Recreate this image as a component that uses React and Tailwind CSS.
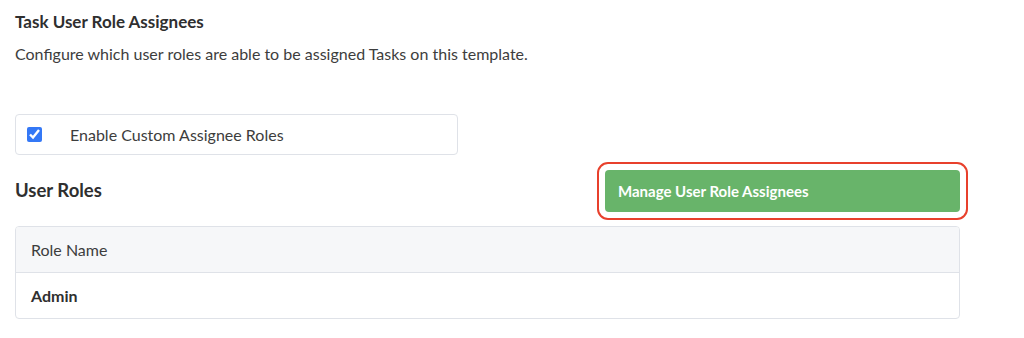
export default function App() {
  return (
    <div className="w-[1024px] h-[338px] bg-white text-[#333] font-['Lato','Liberation_Sans',sans-serif] overflow-hidden">
      <div className="pl-[15px] pr-[64px]">
        {/* Header */}
        <h2 className="pt-[11px] text-[17px] font-bold leading-[22px] text-[#2f2f2f]">Task User Role Assignees</h2>
        <p className="mt-[10px] text-[16px] leading-[22px] text-[#3d3d3d]">
          Configure which user roles are able to be assigned Tasks on this template.
        </p>

        {/* Toggle */}
        <div className="mt-[49px] w-[443px] h-[41px] border border-[#dfe2e8] rounded-[4px] flex items-center pl-[11px]">
          <input type="checkbox" defaultChecked className="w-[15px] h-[15px] accent-[#3478f6]" />
          <span className="ml-[28px] text-[16px] text-[#3d3d3d]">Enable Custom Assignee Roles</span>
        </div>

        {/* User roles header */}
        <div className="mt-[7px] flex items-center justify-between">
          <h3 className="text-[18.5px] font-bold text-[#2f2f2f]">User Roles</h3>
          <div className="mr-[-8px] p-[6px] border-2 border-[#e8402c] rounded-[11px]">
            <button className="w-[355px] h-[42px] bg-[#68b46a] rounded-[4px] text-left pl-[13px] text-white text-[15px] font-bold">
              Manage User Role Assignees
            </button>
          </div>
        </div>

        {/* Table */}
        <div className="mt-[6px] w-[945px] border border-[#dfe2e8] rounded-[4px] overflow-hidden">
          <div className="h-[46px] bg-[#f6f7f9] border-b border-[#dfe2e8] flex items-center pl-[15px] text-[16px] text-[#3d3d3d]">
            Role Name
          </div>
          <div className="h-[45px] flex items-center pl-[15px] text-[16px] font-bold text-[#2f2f2f]">Admin</div>
        </div>
      </div>
    </div>
  )
}
